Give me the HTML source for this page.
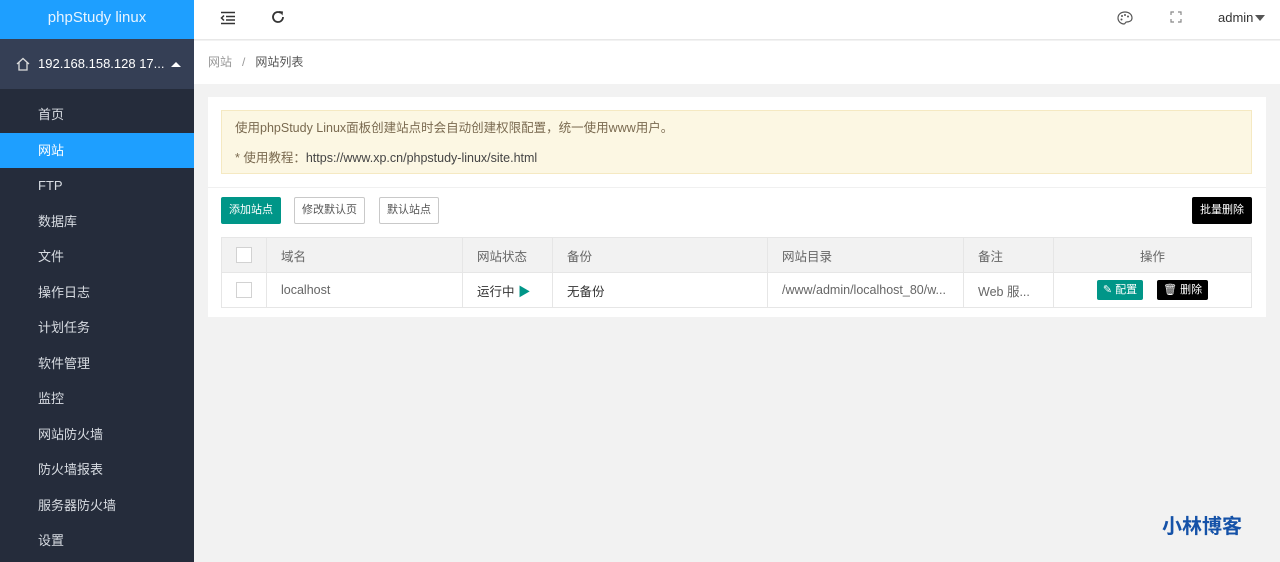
<!DOCTYPE html>
<html><head><meta charset="utf-8"><style>
*{margin:0;padding:0;box-sizing:border-box}
body{width:1280px;height:562px;overflow:hidden;background:#f2f2f2;font-family:"Liberation Sans","Noto Sans CJK SC",sans-serif;font-size:13px;color:#333;position:relative}
.side{position:absolute;left:0;top:0;width:194px;height:562px;background:#252c3b}
.logo{height:39px;background:#1e9fff;color:#e8f4ff;font-size:15px;text-align:center;line-height:36px}
.user{height:50px;background:#353f55;color:#fff;font-size:13px;line-height:50px;padding-left:16px;position:relative}
.mi{height:35.5px;line-height:35.5px;padding-left:38px;color:#d8dce2;font-size:13px}
.mi.act{background:#1e9fff;color:#fff}
.head{position:absolute;left:194px;top:0;right:0;height:40px;background:#fff;border-bottom:1px solid #e8e8e8}
.bc{position:absolute;left:194px;top:41px;right:0;height:43px;background:#fff;line-height:43px;padding-left:14px;font-size:12px;color:#999}
.card{position:absolute;left:208px;top:97px;width:1058px;height:220px;background:#fff}
.note{position:absolute;left:13px;top:13px;width:1031px;height:64px;background:#fcf7e3;border:1px solid #f5e9c2;color:#7a6a50;font-size:12.5px;padding-left:13px}
.btn{position:absolute;top:100px;height:27px;line-height:25px;font-size:11px;padding:0 7px;border:1px solid #c9c9c9;background:#fff;color:#555;border-radius:2px}
table{position:absolute;left:13px;top:140px;width:1031px;border-collapse:collapse;font-size:12.5px}
td,th{border:1px solid #e6e6e6;height:35px;text-align:left;padding-left:14px;font-weight:normal;color:#666}
th{background:#f2f2f2}
.cb{display:inline-block;width:16px;height:16px;border:1px solid #d2d2d2;background:#fff;vertical-align:middle}
.sb{display:inline-block;height:20px;line-height:20px;font-size:11px;padding:0 6px;color:#fff;border-radius:2px}
</style></head><body>
<div class="side">
<div class="logo">phpStudy linux</div>
<div class="user"><svg width="14" height="14" viewBox="0 0 14 14" style="position:absolute;left:16px;top:18px"><path d="M1 7L7 1.5 13 7M3 5.5V13H11V5.5" fill="none" stroke="#ddd" stroke-width="1.3"/></svg><span style="margin-left:22px">192.168.158.128 17...</span><span style="position:absolute;left:171px;top:23px;border:5px solid transparent;border-bottom:5px solid #fff;border-top:0"></span></div>
</div>
<div style="position:absolute;left:0;top:97px;width:194px">
<div class="mi">首页</div><div class="mi act">网站</div><div class="mi">FTP</div><div class="mi">数据库</div><div class="mi">文件</div><div class="mi">操作日志</div><div class="mi">计划任务</div><div class="mi">软件管理</div><div class="mi">监控</div><div class="mi">网站防火墙</div><div class="mi">防火墙报表</div><div class="mi">服务器防火墙</div><div class="mi">设置</div>
</div>
<div class="head">
<svg width="16" height="14" viewBox="0 0 16 14" style="position:absolute;left:26px;top:11px"><path d="M1 1.5H15M6 5.5H15M6 9H15M1 12.5H15M4 4.5L1.5 7 4 9.5" fill="none" stroke="#333" stroke-width="1.5"/></svg>
<svg width="14" height="14" viewBox="0 0 14 14" style="position:absolute;left:77px;top:10px"><path d="M12 7A5 5 0 1 1 10 3" fill="none" stroke="#333" stroke-width="1.8"/><path d="M8 1L12 1.5 11.5 5.5Z" fill="#333"/></svg>
<svg width="16" height="14" viewBox="0 0 16 14" style="position:absolute;left:923px;top:11px"><path d="M8 1C4 1 1 3.5 1 7s3 6 6 6c1.5 0 1-2 2.5-2C12 11 15 10 15 7 15 3.5 12 1 8 1Z" fill="none" stroke="#555" stroke-width="1.2"/><circle cx="5" cy="5" r="1" fill="#555"/><circle cx="8" cy="4" r="1" fill="#555"/><circle cx="11" cy="5.5" r="1" fill="#555"/><circle cx="4.5" cy="8.5" r="1" fill="#555"/></svg>
<svg width="12" height="12" viewBox="0 0 12 12" style="position:absolute;left:976px;top:11px"><path d="M1 4V1H4M8 1H11V4M11 8V11H8M4 11H1V8" fill="none" stroke="#888" stroke-width="1.2"/></svg>
<span style="position:absolute;left:1024px;top:10px;font-size:13px;color:#333">admin</span>
<span style="position:absolute;left:1061px;top:15px;border:5px solid transparent;border-top:6px solid #555;border-bottom:0"></span>
</div>
<div class="bc">网站 &nbsp;&nbsp;/&nbsp;&nbsp; <span style="color:#555">网站列表</span></div>
<div class="card">
<div class="note"><div style="margin-top:6px">使用phpStudy Linux面板创建站点时会自动创建权限配置，统一使用www用户。</div><div style="margin-top:11px">* 使用教程：<span style="color:#444">https://www.xp.cn/phpstudy-linux/site.html</span></div></div>
<div style="position:absolute;left:0;top:90px;width:1058px;border-top:1px solid #f0f0f0"></div>
<div class="btn" style="left:13px;background:#009688;border-color:#009688;color:#fff">添加站点</div>
<div class="btn" style="left:86px">修改默认页</div>
<div class="btn" style="left:171px">默认站点</div>
<div class="btn" style="left:984px;background:#000;border-color:#000;color:#fff">批量删除</div>
<table>
<tr><th style="width:45px"><span class="cb"></span></th><th style="width:196px">域名</th><th style="width:90px">网站状态</th><th style="width:215px">备份</th><th style="width:196px">网站目录</th><th style="width:90px">备注</th><th style="text-align:center;padding:0">操作</th></tr>
<tr><td><span class="cb"></span></td><td>localhost</td><td style="color:#333">运行中 <span style="color:#009688">▶</span></td><td style="color:#333">无备份</td><td>/www/admin/localhost_80/w...</td><td>Web 服...</td><td style="text-align:center;padding:0"><span class="sb" style="background:#009688">✎ 配置</span>&nbsp;&nbsp;&nbsp;&nbsp;<span class="sb" style="background:#000">🗑 删除</span></td></tr>
</table>
</div>
<div style="position:absolute;left:1162px;top:510px;font-size:20px;font-weight:bold;color:#1552a8;letter-spacing:0">小林博客</div>
</body></html>
